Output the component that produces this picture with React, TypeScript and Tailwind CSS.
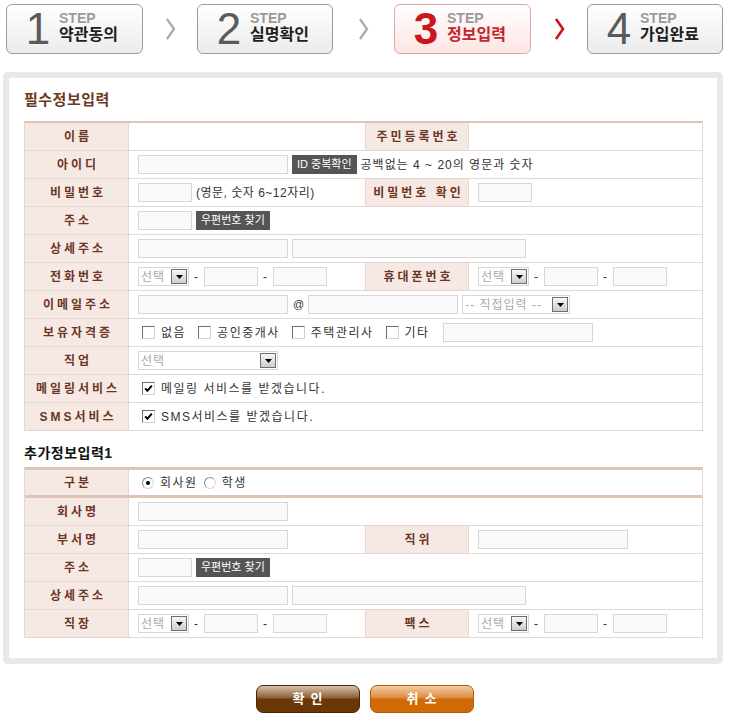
import React from "react";

const F = "font-['Liberation_Sans','Noto_Sans_CJK_KR',sans-serif]";

function Chevron({ red }: { red?: boolean }) {
  return (
    <svg width="11" height="22" viewBox="0 0 11 22">
      <polyline
        points="2,1 9,11 2,21"
        fill="none"
        stroke={red ? "#c8171e" : "#a9a9a9"}
        strokeWidth={red ? 2.6 : 2.2}
      />
    </svg>
  );
}

function Step({
  n,
  label,
  w,
  active,
}: {
  n: string;
  label: string;
  w: string;
  active?: boolean;
}) {
  return (
    <div
      className={`${w} h-[50px] shrink-0 rounded-[6px] border flex items-start ${
        active
          ? "border-[#e4a4a4] bg-[linear-gradient(to_bottom,#ffffff,#fde4e4)]"
          : "border-[#9c9c9c] bg-[linear-gradient(to_bottom,#ffffff,#ebebeb)]"
      }`}
    >
      <div
        className={`ml-[12px] w-[38px] h-[48px] flex items-center justify-center text-[44px] leading-none ${
          active ? "font-bold text-[#c8171e]" : "text-[#5a5a5a]"
        }`}
      >
        {n}
      </div>
      <div className="ml-[2px] pt-[6px] flex flex-col">
        <span className="text-[14px] leading-[14px] font-bold text-[#9a9a9a]">STEP</span>
        <span
          className={`text-[16px] leading-[19px] font-bold ${
            active ? "text-[#c4262b]" : "text-[#1e1e1e]"
          }`}
        >
          {label}
        </span>
      </div>
    </div>
  );
}

function Header() {
  return (
    <div className="flex items-start pt-[4px] pl-[6px]">
      <Step n="1" label="약관동의" w="w-[137px]" />
      <div className="w-[54px] h-[50px] flex items-center justify-center">
        <Chevron />
      </div>
      <Step n="2" label="실명확인" w="w-[136px]" />
      <div className="w-[61px] h-[50px] flex items-center justify-center">
        <Chevron />
      </div>
      <Step n="3" label="정보입력" w="w-[137px]" active />
      <div className="w-[56px] h-[50px] flex items-center justify-center">
        <Chevron red />
      </div>
      <Step n="4" label="가입완료" w="w-[136px]" />
    </div>
  );
}

function Input({ w }: { w: string }) {
  return <div className={`${w} h-[19px] shrink-0 border border-[#d7d7d7] bg-[#fafafa]`} />;
}

function Arrow() {
  return (
    <div className="w-[16px] h-[15px] shrink-0 border border-[#6f6f6f] bg-[linear-gradient(to_bottom,#f7f7f7,#cdcdcd)] flex items-center justify-center">
      <svg width="7" height="4" viewBox="0 0 7 4">
        <path d="M0 0h7L3.5 4z" fill="#000" />
      </svg>
    </div>
  );
}

function Select({ w, text }: { w: string; text: string }) {
  return (
    <div
      className={`${w} h-[19px] shrink-0 border border-[#d7d7d7] bg-white flex items-center justify-between pl-[2px] pr-px`}
    >
      <span className="text-[12px] leading-none text-[#a9a9a9] tracking-[1px] whitespace-nowrap">{text}</span>
      <Arrow />
    </div>
  );
}

function Btn({ children }: { children: React.ReactNode }) {
  return (
    <div className="h-[19px] shrink-0 bg-[#555555] text-white text-[11px] leading-[19px] px-[5px] whitespace-nowrap">
      {children}
    </div>
  );
}

function Check({ checked }: { checked?: boolean }) {
  return (
    <div className="w-[13px] h-[13px] shrink-0 border border-t-[#6e6e6e] border-l-[#6e6e6e] border-r-[#d2d2d2] border-b-[#d2d2d2] bg-white flex items-center justify-center">
      {checked && (
        <svg width="9" height="9" viewBox="0 0 8 8">
          <path d="M1 3.8 L3 6 L7 1.5" stroke="#000" strokeWidth="1.7" fill="none" />
        </svg>
      )}
    </div>
  );
}

function Radio({ checked }: { checked?: boolean }) {
  return (
    <div className="w-[12px] h-[12px] shrink-0 rounded-full border border-t-[#8a8a8a] border-l-[#8a8a8a] border-r-[#d6d6d6] border-b-[#d6d6d6] bg-white flex items-center justify-center">
      {checked && <div className="w-[4px] h-[4px] rounded-full bg-black" />}
    </div>
  );
}

function Dash() {
  return <span className="mx-[5px] text-[12px] text-[#333]">-</span>;
}

function Th({ children, side }: { children: React.ReactNode; side?: boolean }) {
  return (
    <div
      className={`w-[104px] shrink-0 bg-[#f6e9e3] flex items-center justify-center pl-[3px] text-[12px] font-bold tracking-[3px] text-[#6b3526] border-r border-[#e6d8d1] whitespace-nowrap ${
        side ? "border-l" : ""
      }`}
    >
      {children}
    </div>
  );
}

function Td({ children, w, pl }: { children?: React.ReactNode; w?: string; pl?: string }) {
  return (
    <div
      className={`${w ?? "flex-1"} flex items-center ${pl ?? "pl-[9px]"} text-[12px] text-[#333] tracking-[1px] whitespace-nowrap`}
    >
      {children}
    </div>
  );
}

function Row({ children, cls }: { children: React.ReactNode; cls?: string }) {
  return <div className={`flex h-[28px] border-b border-[#e6d8d1] ${cls ?? ""}`}>{children}</div>;
}

function PhoneGroup() {
  return (
    <>
      <Select w="w-[51px]" text="선택" />
      <Dash />
      <Input w="w-[54px]" />
      <Dash />
      <Input w="w-[54px]" />
    </>
  );
}

function Opt({ label, checked, first }: { label: string; checked?: boolean; first?: boolean }) {
  return (
    <div className={`flex items-center ${first ? "" : "ml-[12px]"}`}>
      <Check checked={checked} />
      <span className="ml-[6px] tracking-[1.5px]">{label}</span>
    </div>
  );
}

export default function App() {
  return (
    <div className={`w-[729px] h-[719px] bg-white ${F} text-[12px] text-[#333]`}>
      <Header />

      <div className="ml-[3px] mt-[18px] w-[720px] h-[592px] border-[6px] border-[#e8e8e8] rounded-[5px] pl-[15px] pr-[14px] pt-[14px]">
        <h2 className="h-[16px] text-[15px] leading-[16px] font-bold text-[#6b3a1e] tracking-[0.5px]">
          필수정보입력
        </h2>

        <div className="mt-[13px] border-t-2 border-t-[#dfc4b6] border-x border-x-[#e6d8d1]">
          <Row>
            <Th>이름</Th>
            <Td w="w-[236px]" />
            <Th side>주민등록번호</Th>
            <Td />
          </Row>
          <Row>
            <Th>아이디</Th>
            <Td>
              <Input w="w-[150px]" />
              <div className="ml-[4px] tracking-normal">
                <Btn>ID 중복확인</Btn>
              </div>
              <span className="ml-[4px]">공백없는 4 ~ 20의 영문과 숫자</span>
            </Td>
          </Row>
          <Row>
            <Th>비밀번호</Th>
            <Td w="w-[236px]">
              <Input w="w-[54px]" />
              <span className="ml-[4px] tracking-[0.5px]">(영문, 숫자 6~12자리)</span>
            </Td>
            <Th side>비밀번호 확인</Th>
            <Td>
              <Input w="w-[54px]" />
            </Td>
          </Row>
          <Row>
            <Th>주소</Th>
            <Td>
              <Input w="w-[54px]" />
              <div className="ml-[4px] tracking-normal">
                <Btn>우편번호 찾기</Btn>
              </div>
            </Td>
          </Row>
          <Row>
            <Th>상세주소</Th>
            <Td>
              <Input w="w-[150px]" />
              <div className="ml-[4px]">
                <Input w="w-[234px]" />
              </div>
            </Td>
          </Row>
          <Row>
            <Th>전화번호</Th>
            <Td w="w-[236px]">
              <PhoneGroup />
            </Td>
            <Th side>휴대폰번호</Th>
            <Td>
              <PhoneGroup />
            </Td>
          </Row>
          <Row>
            <Th>이메일주소</Th>
            <Td>
              <Input w="w-[150px]" />
              <span className="ml-[5px] mr-[4px] text-[11px] tracking-normal">@</span>
              <Input w="w-[150px]" />
              <div className="ml-[4px]">
                <Select w="w-[108px]" text="-- 직접입력 --" />
              </div>
            </Td>
          </Row>
          <Row>
            <Th>보유자격증</Th>
            <Td pl="pl-[13px]">
              <Opt label="없음" first />
              <Opt label="공인중개사" />
              <Opt label="주택관리사" />
              <Opt label="기타" />
              <div className="ml-[13px]">
                <Input w="w-[150px]" />
              </div>
            </Td>
          </Row>
          <Row>
            <Th>직업</Th>
            <Td>
              <Select w="w-[140px]" text="선택" />
            </Td>
          </Row>
          <Row>
            <Th>메일링서비스</Th>
            <Td pl="pl-[13px]">
              <Opt label="메일링 서비스를 받겠습니다." checked first />
            </Td>
          </Row>
          <Row>
            <Th>SMS서비스</Th>
            <Td pl="pl-[13px]">
              <Opt label="SMS서비스를 받겠습니다." checked first />
            </Td>
          </Row>
        </div>

        <h3 className="mt-[14px] h-[16px] text-[14px] leading-[16px] font-bold text-[#111] tracking-[0.5px]">
          추가정보입력1
        </h3>

        <div className="mt-[6px] border-t-[3px] border-t-[#dfc4b6] border-x border-x-[#e6d8d1]">
          <div className="flex h-[28px] border-b-[3px] border-[#dfc4b6]">
            <Th>구분</Th>
            <Td pl="pl-[13px]">
              <Radio checked />
              <span className="ml-[6px] tracking-[1.5px]">회사원</span>
              <div className="ml-[6px]">
                <Radio />
              </div>
              <span className="ml-[6px] tracking-[1.5px]">학생</span>
            </Td>
          </div>
          <Row>
            <Th>회사명</Th>
            <Td>
              <Input w="w-[150px]" />
            </Td>
          </Row>
          <Row>
            <Th>부서명</Th>
            <Td w="w-[236px]">
              <Input w="w-[150px]" />
            </Td>
            <Th side>직위</Th>
            <Td>
              <Input w="w-[150px]" />
            </Td>
          </Row>
          <Row>
            <Th>주소</Th>
            <Td>
              <Input w="w-[54px]" />
              <div className="ml-[4px] tracking-normal">
                <Btn>우편번호 찾기</Btn>
              </div>
            </Td>
          </Row>
          <Row>
            <Th>상세주소</Th>
            <Td>
              <Input w="w-[150px]" />
              <div className="ml-[4px]">
                <Input w="w-[234px]" />
              </div>
            </Td>
          </Row>
          <Row>
            <Th>직장</Th>
            <Td w="w-[236px]">
              <PhoneGroup />
            </Td>
            <Th side>팩스</Th>
            <Td>
              <PhoneGroup />
            </Td>
          </Row>
        </div>
      </div>

      <div className="mt-[21px] flex justify-center gap-[10px]">
        <div className="w-[104px] h-[28px] rounded-[7px] border border-[#4a2404] bg-[linear-gradient(to_bottom,#d9c2ad_0%,#8d5e34_46%,#6a3806_50%,#6a3806_100%)] flex items-center justify-center pl-[6px] text-[13px] font-bold tracking-[6px] text-white">
          확인
        </div>
        <div className="w-[104px] h-[28px] rounded-[7px] border border-[#b25a04] bg-[linear-gradient(to_bottom,#f3cda8_0%,#dc8a3c_46%,#d06a04_50%,#d06a04_100%)] flex items-center justify-center pl-[6px] text-[13px] font-bold tracking-[6px] text-white">
          취소
        </div>
      </div>
    </div>
  );
}
